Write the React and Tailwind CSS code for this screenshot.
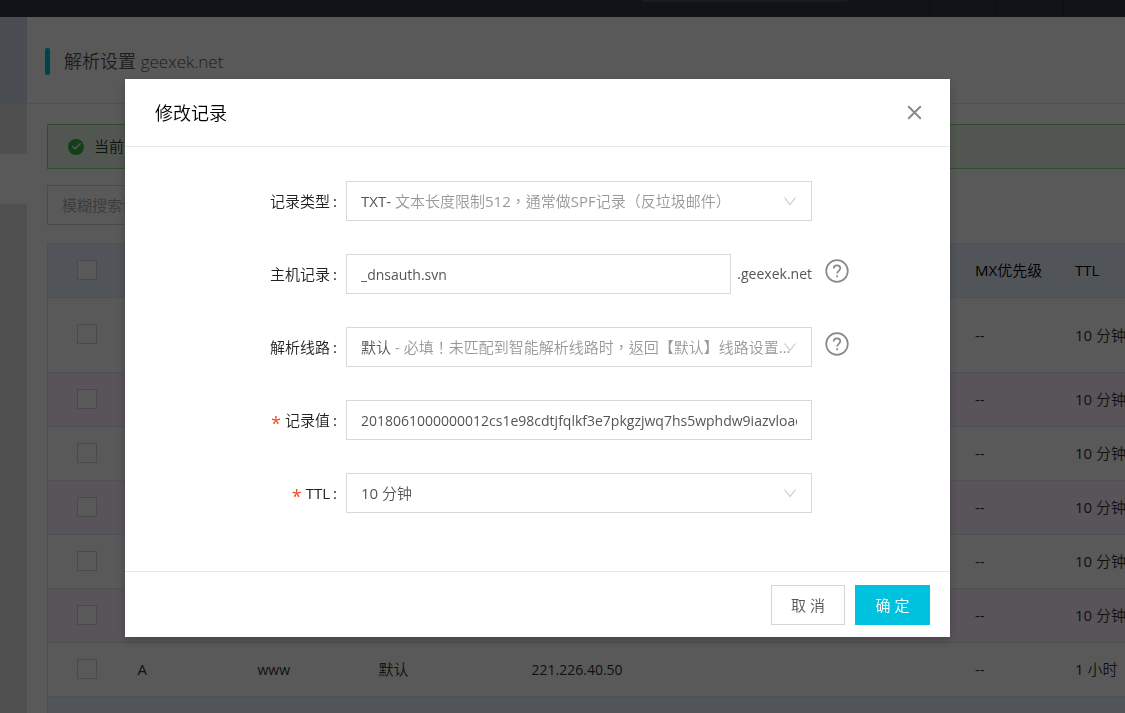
import { useState } from "react";
import { Check, X } from "lucide-react";

const records = [
  { id: 1, mx: "--", ttl: "10 分钟", tall: true },
  { id: 2, mx: "--", ttl: "10 分钟" },
  { id: 3, mx: "--", ttl: "10 分钟" },
  { id: 4, mx: "--", ttl: "10 分钟" },
  { id: 5, mx: "--", ttl: "10 分钟" },
  { id: 6, mx: "--", ttl: "10 分钟" },
  { id: 7, type: "A", host: "www", line: "默认", value: "221.226.40.50", mx: "--", ttl: "1 小时" },
];

function TickBox({ label }) {
  return (
    <input
      type="checkbox"
      aria-label={label}
      className="block w-5 h-5 ml-[29px] mb-0.5 appearance-none border border-[#d5d5d5] bg-white"
    />
  );
}

function RecordsPage() {
  return (
    <div className="h-full flex flex-col bg-white">
      {/* Top bar */}
      <nav className="h-[17px] shrink-0 flex justify-end bg-[#2e3947]">
        <span className="w-[205px] h-0.5 mr-[82px] bg-[#454f5c]" />
        <span className="w-[67px] border-l border-[#252d38]" />
        <span className="w-[67px] border-l border-[#252d38]" />
        <span className="w-[62px] border-l border-[#252d38]" />
      </nav>

      <div className="flex-1 min-h-0 flex">
        {/* Collapsed side menu */}
        <aside className="w-[27px] shrink-0 flex flex-col">
          <div className="h-[87px] bg-[#d0dcea]" />
          <div className="h-[50px] bg-[#e2e2e2]" />
          <div className="h-[50px] bg-white" />
          <div className="flex-1 bg-[#e6e6e6]" />
        </aside>

        <main className="flex-1 min-w-0 overflow-hidden">
          <header className="h-[87px] pt-0.5 pl-[18px] flex items-center gap-3.5 border-b border-[#e1e6eb]">
            <span className="w-[5px] h-[27px] rounded-xs bg-[#00c1de]" />
            <h1 className="text-lg font-light text-[#555]">
              解析设置 <span className="text-[17px]">geexek.net</span>
            </h1>
          </header>

          <div className="pl-5 pt-5">
            <div className="h-[45px] pl-5 flex items-center gap-2.5 border border-r-0 border-[#90d590] bg-[#ebf6e5] text-[15px]">
              <span className="w-4 h-4 rounded-full flex items-center justify-center bg-[#35b34a]">
                <Check size={11} strokeWidth={3} color="white" />
              </span>
              当前
            </div>

            <input
              type="text"
              placeholder="模糊搜索记录"
              aria-label="模糊搜索记录"
              className="block mt-4 h-10 w-60 px-3.5 border border-[#d5d5d5] text-[15px] placeholder:text-[#aaa]"
            />

            <table className="mt-[18px] w-full table-fixed border-collapse border-l border-[#e1e6eb] text-left text-[15px] whitespace-nowrap">
              <colgroup>
                <col className="w-20" />
                <col className="w-[120px]" />
                <col className="w-[121px]" />
                <col className="w-[153px]" />
                <col />
                <col className="w-[100px]" />
                <col className="w-[60px]" />
              </colgroup>
              <thead>
                <tr className="h-[54px] border-y border-[#e1e6eb] bg-[#e7f3ff] text-black">
                  <th><TickBox label="全选" /></th>
                  <th colSpan={4} />
                  <th className="pl-2.5 font-normal">MX优先级</th>
                  <th className="pl-2.5 font-normal">TTL</th>
                </tr>
              </thead>
              <tbody>
                {records.map((r) => (
                  <tr
                    key={r.id}
                    className={`border-b border-[#e1e6eb] ${r.tall ? "h-[75px]" : "h-[54px]"} ${r.id % 2 === 0 ? "bg-[#fff0ff]" : "bg-white"}`}
                  >
                    <td><TickBox label={`选择记录 ${r.id}`} /></td>
                    <td className="pl-2.5">{r.type}</td>
                    <td className="pl-2.5 text-sm">{r.host}</td>
                    <td className="pl-2.5">{r.line}</td>
                    <td className="pl-2.5 text-sm">{r.value}</td>
                    <td className="pl-2.5">{r.mx}</td>
                    <td className="pl-2.5">{r.ttl}</td>
                  </tr>
                ))}
                <tr className="h-[54px] bg-[#e7f3ff]">
                  <td colSpan={7} />
                </tr>
              </tbody>
            </table>
          </div>
        </main>
      </div>
    </div>
  );
}

function Field({ id, label, required, help, children }) {
  return (
    <div className="flex items-start gap-[9px]">
      <label
        htmlFor={id}
        className="w-[212px] h-10 flex items-center justify-end text-[15px] text-[#222]"
      >
        {required && <span className="pt-1.5 pr-1 text-lg leading-none text-[#f04b22]">*</span>}
        {label}
        <span className="pl-[3px]">:</span>
      </label>
      <div className="w-[466px] flex items-center">{children}</div>
      {help && (
        <button type="button" aria-label="帮助" className="mt-[5px] ml-1">
          <svg width="24" height="24" viewBox="0 0 24 24" fill="none" stroke="#888" strokeWidth="1.7">
            <circle cx="12" cy="12" r="10.8" />
            <path d="M8.7 9.6c0-2 1.4-3.3 3.3-3.3s3.3 1.2 3.3 3c0 2.4-3.2 2.6-3.2 5.2" />
            <path d="M12.1 16.2v2" />
          </svg>
        </button>
      )}
    </div>
  );
}

function SelectBox({ id, prefix, options }) {
  return (
    <div className="relative w-full h-10 pl-3.5 pr-[19px] flex items-center border border-[#d5dad5] text-[15px] text-[#555]">
      {prefix && <span className="shrink-0 pr-1">{prefix}</span>}
      <select
        id={id}
        className={`flex-1 min-w-0 h-full appearance-none truncate ${prefix ? "font-['Open_Sans','Noto_Sans_CJK_TC_DemiLight','Noto_Sans_CJK_TC',sans-serif] text-[#999]" : ""}`}
      >
        {options.map((o) => (
          <option key={o}>{o}</option>
        ))}
      </select>
      <svg
        className="absolute right-[15px] w-3 h-3 pointer-events-none"
        viewBox="0 0 12 12"
        fill="none"
        stroke="#ccc"
        strokeWidth="1.2"
      >
        <path d="M0.5 2.5 6 9.5 11.5 2.5" />
      </svg>
    </div>
  );
}

function EditRecordDialog() {
  const [host, setHost] = useState("_dnsauth.svn");
  const [value, setValue] = useState(
    "2018061000000012cs1e98cdtjfqlkf3e7pkgzjwq7hs5wphdw9iazvloaq3"
  );

  return (
    <div
      role="dialog"
      aria-labelledby="dialog-title"
      className="w-full bg-white shadow-[0_4px_10px_rgba(0,0,0,0.2)]"
    >
      <header className="h-[68px] pl-[30px] pr-6 flex items-center justify-between border-b border-[#e6e8f0]">
        <h2 id="dialog-title" className="text-lg font-light text-black">修改记录</h2>
        <button type="button" aria-label="关闭">
          <X size={23} strokeWidth={2} color="#888" />
        </button>
      </header>

      <form className="pt-[34px] pb-[58px] flex flex-col gap-[33px]">
        <Field id="type" label="记录类型">
          <SelectBox
            id="type"
            prefix="TXT-"
            options={["文本长度限制512，通常做SPF记录（反垃圾邮件）"]}
          />
        </Field>

        <Field id="host" label="主机记录" help>
          <input
            id="host"
            type="text"
            value={host}
            onChange={(e) => setHost(e.target.value)}
            className="flex-1 min-w-0 h-10 px-3.5 border border-[#d5dad5] text-sm text-[#555]"
          />
          <span className="pl-1.5 text-sm text-[#555]">.geexek.net</span>
        </Field>

        <Field id="line" label="解析线路" help>
          <SelectBox
            id="line"
            prefix="默认"
            options={["- 必填！未匹配到智能解析线路时，返回【默认】线路设置的解析记录"]}
          />
        </Field>

        <Field id="value" label="记录值" required>
          <input
            id="value"
            type="text"
            value={value}
            onChange={(e) => setValue(e.target.value)}
            className="w-full h-10 px-3.5 border border-[#d5dad5] text-sm text-[#555]"
          />
        </Field>

        <Field id="ttl" label="TTL" required>
          <SelectBox id="ttl" options={["10 分钟", "30 分钟", "1 小时"]} />
        </Field>
      </form>

      <footer className="pt-[13px] pb-3 pr-5 flex justify-end gap-2.5 border-t border-[#e6e6e6] text-[15px]">
        <button type="button" className="h-10 w-[74px] border border-[#d5d5d5] text-[#555]">
          取 消
        </button>
        <button type="button" className="h-10 w-[75px] bg-[#00c1de] text-white font-medium">
          确 定
        </button>
      </footer>
    </div>
  );
}

export default function App() {
  return (
    <div className="h-screen overflow-hidden font-['Open_Sans','Noto_Sans_CJK_SC_DemiLight','Noto_Sans_CJK_SC',sans-serif] text-[#333]">
      <RecordsPage />
      {/* Backdrop */}
      <div className="fixed inset-0 pt-[79px] pl-[125px] pr-[175px] bg-black/65">
        <EditRecordDialog />
      </div>
    </div>
  );
}
